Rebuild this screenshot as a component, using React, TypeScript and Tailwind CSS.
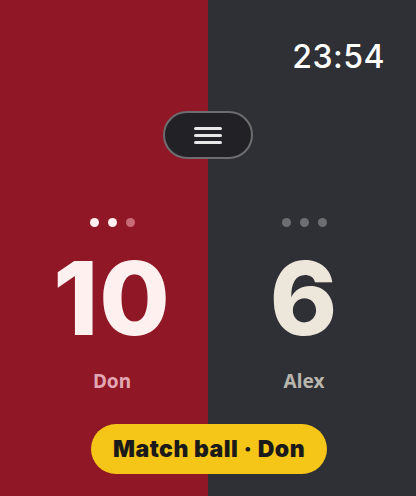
import React from "react";

type Side = {
  name: string;
  score: number;
  won: number;
  bg: string;
  scoreColor: string;
  nameColor: string;
  dotOn: string;
  dotOff: string;
  pad: string;
};

const sides: Side[] = [
  {
    name: "Don",
    score: 10,
    won: 2,
    bg: "bg-[#8f1726]",
    scoreColor: "text-[#fdf0ef]",
    nameColor: "text-[#e2a7b2]",
    dotOn: "bg-[#fdf0ef]",
    dotOff: "bg-[#c86b77]",
    pad: "pl-4",
  },
  {
    name: "Alex",
    score: 6,
    won: 0,
    bg: "bg-[#2f3036]",
    scoreColor: "text-[#ede6da]",
    nameColor: "text-[#b9b6ae]",
    dotOn: "bg-[#ede6da]",
    dotOff: "bg-[#6e6e72]",
    pad: "pr-4",
  },
];

function Panel({ side }: { side: Side }) {
  return (
    <div className={`flex flex-col items-center ${side.bg} ${side.pad}`}>
      <div className="mt-[218px] flex gap-[9px]">
        {[0, 1, 2].map((i) => (
          <span
            key={i}
            className={`h-[9px] w-[9px] rounded-full ${i < side.won ? side.dotOn : side.dotOff}`}
          />
        ))}
      </div>
      <div
        className={`mt-[20px] text-[102px] leading-none font-extrabold tracking-[1px] ${side.scoreColor}`}
        style={{ fontFamily: "Inter, 'Noto Sans', sans-serif" }}
      >
        {side.score}
      </div>
      <div
        className={`mt-[18px] text-[19px] font-bold ${side.nameColor}`}
        style={{ fontFamily: "'Noto Sans', 'Open Sans', sans-serif" }}
      >
        {side.name}
      </div>
    </div>
  );
}

export default function App() {
  return (
    <div className="relative h-[496px] w-[416px] overflow-hidden">
      <div className="grid h-full grid-cols-2">
        {sides.map((s) => (
          <Panel key={s.name} side={s} />
        ))}
      </div>

      {/* clock */}
      <div
        className="absolute right-[31px] top-[33px] text-[32px] font-medium tracking-[0.5px] text-white"
        style={{ fontFamily: "Inter, sans-serif" }}
      >
        23:54
      </div>

      {/* menu button */}
      <button className="absolute left-[163px] top-[111px] flex h-[48px] w-[90px] flex-col items-center justify-center gap-[4px] rounded-full border-2 border-[#6d6d70] bg-[#222126]">
        <span className="h-[3px] w-[28px] rounded-full bg-[#e8e8e8]" />
        <span className="h-[3px] w-[28px] rounded-full bg-[#e8e8e8]" />
        <span className="h-[3px] w-[28px] rounded-full bg-[#e8e8e8]" />
      </button>

      {/* match ball pill */}
      <div
        className="absolute left-[91px] top-[424px] flex h-[50px] w-[236px] items-center justify-center rounded-full bg-[#f5c518] text-[23px] font-black tracking-[0.5px] text-[#1b1a1a]"
        style={{ fontFamily: "Inter, 'Noto Sans', sans-serif" }}
      >
        Match ball · Don
      </div>
    </div>
  );
}
